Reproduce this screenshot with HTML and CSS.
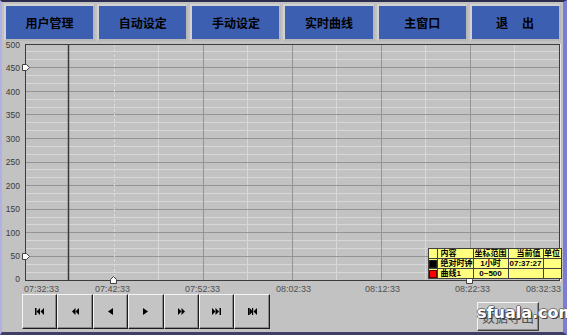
FILE: index.html
```html
<!DOCTYPE html>
<html lang="zh">
<head>
<meta charset="utf-8">
<title>实时曲线</title>
<link rel="stylesheet" href="styles.css">
</head>
<body>
<div class="screen">
  <nav class="topnav">
    <button class="nav-btn">用户管理</button>
    <button class="nav-btn">自动设定</button>
    <button class="nav-btn">手动设定</button>
    <button class="nav-btn">实时曲线</button>
    <button class="nav-btn">主窗口</button>
    <button class="nav-btn nav-exit">退　出</button>
  </nav>

  <div class="chart">
    <svg class="plot" width="561" height="252" viewBox="2 41 561 252">
      <g class="minor">
        <line x1="25" x2="559" y1="272.5" y2="272.5"/><line x1="25" x2="559" y1="264.5" y2="264.5"/>
        <line x1="25" x2="559" y1="248.5" y2="248.5"/><line x1="25" x2="559" y1="240.5" y2="240.5"/>
        <line x1="25" x2="559" y1="224.5" y2="224.5"/><line x1="25" x2="559" y1="217.5" y2="217.5"/>
        <line x1="25" x2="559" y1="201.5" y2="201.5"/><line x1="25" x2="559" y1="193.5" y2="193.5"/>
        <line x1="25" x2="559" y1="177.5" y2="177.5"/><line x1="25" x2="559" y1="169.5" y2="169.5"/>
        <line x1="25" x2="559" y1="154.5" y2="154.5"/><line x1="25" x2="559" y1="146.5" y2="146.5"/>
        <line x1="25" x2="559" y1="130.5" y2="130.5"/><line x1="25" x2="559" y1="122.5" y2="122.5"/>
        <line x1="25" x2="559" y1="107.5" y2="107.5"/><line x1="25" x2="559" y1="99.5" y2="99.5"/>
        <line x1="25" x2="559" y1="83.5" y2="83.5"/><line x1="25" x2="559" y1="75.5" y2="75.5"/>
        <line x1="25" x2="559" y1="59.5" y2="59.5"/><line x1="25" x2="559" y1="51.5" y2="51.5"/>
        <line x1="158.5" x2="158.5" y1="44" y2="280"/><line x1="247.5" x2="247.5" y1="44" y2="280"/>
        <line x1="336.5" x2="336.5" y1="44" y2="280"/><line x1="425.5" x2="425.5" y1="44" y2="280"/>
        <line x1="514.5" x2="514.5" y1="44" y2="280"/>
      </g>
      <g class="major">
        <line x1="25" x2="559" y1="256.5" y2="256.5"/><line x1="25" x2="559" y1="232.5" y2="232.5"/>
        <line x1="25" x2="559" y1="209.5" y2="209.5"/><line x1="25" x2="559" y1="185.5" y2="185.5"/>
        <line x1="25" x2="559" y1="162.5" y2="162.5"/><line x1="25" x2="559" y1="138.5" y2="138.5"/>
        <line x1="25" x2="559" y1="114.5" y2="114.5"/><line x1="25" x2="559" y1="91.5" y2="91.5"/>
        <line x1="25" x2="559" y1="67.5" y2="67.5"/>
        <line x1="203.5" x2="203.5" y1="44" y2="280"/><line x1="292.5" x2="292.5" y1="44" y2="280"/>
        <line x1="381.5" x2="381.5" y1="44" y2="280"/><line x1="470.5" x2="470.5" y1="44" y2="280"/>
      </g>
      <line class="cursor-light" x1="114.5" x2="114.5" y1="44" y2="280"/>
      <line class="cursor" x1="68.5" x2="68.5" y1="44" y2="280"/>
      <g class="frame">
        <line x1="25" x2="560" y1="44.5" y2="44.5"/>
        <line x1="25" x2="560" y1="280.5" y2="280.5"/>
        <line x1="25.5" x2="25.5" y1="44" y2="281"/>
        <line x1="559.5" x2="559.5" y1="44" y2="281"/>
      </g>
      <line class="frame-hi" x1="560.5" x2="560.5" y1="44" y2="282"/>

      <g class="ylabels">
        <text x="20" y="45">500</text>
        <text x="20" y="68">450</text>
        <text x="20" y="92">400</text>
        <text x="20" y="115">350</text>
        <text x="20" y="139">300</text>
        <text x="20" y="162">250</text>
        <text x="20" y="186">200</text>
        <text x="20" y="209">150</text>
        <text x="20" y="233">100</text>
        <text x="20" y="256">50</text>
        <text x="20" y="279">0</text>
      </g>
      <g class="xlabels">
        <text class="xl-start" x="24" y="288.5">07:32:33</text>
        <text x="112.5" y="288.5">07:42:33</text>
        <text x="202.5" y="288.5">07:52:33</text>
        <text x="293.5" y="288.5">08:02:33</text>
        <text x="382.5" y="288.5">08:12:33</text>
        <text x="472.5" y="288.5">08:22:33</text>
        <text class="xl-end" x="561" y="288.5">08:32:33</text>
      </g>

      <g class="marker">
        <polygon points="22.5,64.5 26.5,64.5 29.5,67.5 26.5,70.5 22.5,70.5"/>
        <polygon points="22.5,253.5 26.5,253.5 29.5,256.5 26.5,259.5 22.5,259.5"/>
        <polygon points="110.5,283.5 110.5,279.5 113.5,276.5 116.5,279.5 116.5,283.5"/>
        <polygon points="466.5,283.5 466.5,279.5 469.5,276.5 472.5,279.5 472.5,283.5"/>
      </g>
    </svg>

    <table class="legend">
      <colgroup>
        <col class="c-sw"><col class="c-name"><col class="c-range"><col class="c-val"><col class="c-unit">
      </colgroup>
      <tr>
        <td></td><td class="l">内容</td><td>坐标范围</td><td class="r">当前值</td><td>单位</td>
      </tr>
      <tr>
        <td><span class="swatch sw-black"></span></td><td class="l">绝对时钟</td><td>1小时</td><td>07:37:27</td><td></td>
      </tr>
      <tr>
        <td><span class="swatch sw-red"></span></td><td class="l">曲线1</td><td>0~500</td><td></td><td></td>
      </tr>
    </table>
  </div>

  <div class="controls">
    <div class="player">
      <button class="pbtn"><svg width="9" height="7" viewBox="0 0 9 7"><rect x="0" y="0" width="1.5" height="7"/><polygon points="5,0 1.5,3.5 5,7"/><polygon points="9,0 5.5,3.5 9,7"/></svg></button>
      <button class="pbtn"><svg width="7" height="7" viewBox="0 0 7 7"><polygon points="3.5,0 0,3.5 3.5,7"/><polygon points="7,0 3.5,3.5 7,7"/></svg></button>
      <button class="pbtn"><svg width="5" height="7" viewBox="0 0 5 7"><polygon points="5,0 0,3.5 5,7"/></svg></button>
      <button class="pbtn"><svg width="5" height="7" viewBox="0 0 5 7"><polygon points="0,0 5,3.5 0,7"/></svg></button>
      <button class="pbtn"><svg width="7" height="7" viewBox="0 0 7 7"><polygon points="0,0 3.5,3.5 0,7"/><polygon points="3.5,0 7,3.5 3.5,7"/></svg></button>
      <button class="pbtn"><svg width="9" height="7" viewBox="0 0 9 7"><polygon points="0,0 3.5,3.5 0,7"/><polygon points="3.5,0 7,3.5 3.5,7"/><rect x="7.5" y="0" width="1.5" height="7"/></svg></button>
      <button class="pbtn"><svg width="9" height="7" viewBox="0 0 9 7"><rect x="0" y="0" width="1.5" height="7"/><polygon points="1.5,0 5,3.5 1.5,7"/><polygon points="9,0 5.5,3.5 9,7"/><rect x="4" y="0" width="1.2" height="7"/></svg></button>
    </div>
    <button class="export">数据导出</button>
  </div>
</div>
<div class="watermark">sfuala.com</div>
</body>
</html>
```

FILE: styles.css
```css
html, body {
  margin: 0;
  padding: 0;
}
body {
  position: relative;
  width: 567px;
  height: 335px;
  overflow: hidden;
  background: #c0c0c0;
  font-family: "Liberation Sans", Arial, "Noto Sans CJK SC", sans-serif;
}
.screen {
  box-sizing: border-box;
  width: 567px;
  height: 335px;
  background: #c2c2c2;
  border-top: 2px solid #2c2c4c;
  border-left: 2px solid #b0b0e4;
  border-right: 4px solid #7c7cd0;
  border-bottom: 3px solid #3e3e66;
  display: flex;
  flex-direction: column;
  overflow: hidden;
}

/* top navigation */
.topnav {
  display: grid;
  grid-template-columns: repeat(6, 1fr);
  column-gap: 2px;
  padding: 2px 2px 0 2px;
  height: 39px;
  box-sizing: border-box;
  flex: none;
}
.nav-btn {
  margin: 0;
  padding: 0;
  height: 37px;
  background: #3c5fb1;
  border: 2px solid #d2d2d2;
  border-right-color: #b8b8b8;
  border-bottom-color: #b8b8b8;
  color: #000;
  font-family: "Noto Sans CJK SC", sans-serif;
  font-weight: 700;
  font-size: 12px;
  line-height: 1;
}
.nav-exit {
  letter-spacing: 1px;
}

/* chart */
.chart {
  position: relative;
  flex: none;
  height: 252px;
}
.plot {
  display: block;
  overflow: visible;
}
.minor line {
  stroke: #d8d8d8;
  stroke-width: 1;
}
.major line {
  stroke: #949494;
  stroke-width: 1;
}
.cursor-light {
  stroke: #dadada;
  stroke-width: 1;
  stroke-dasharray: 3 2;
}
.cursor {
  stroke: #3a3a3a;
  stroke-width: 1.5;
}
.frame line {
  stroke: #3c3c3c;
  stroke-width: 1;
}
.frame-hi {
  stroke: #e8e8e8;
  stroke-width: 1;
}
.ylabels text {
  font-family: "Liberation Sans", Arial, sans-serif;
  font-size: 8.5px;
  fill: #3a3a3a;
  text-anchor: end;
  dominant-baseline: central;
}
.xlabels text {
  font-family: "Liberation Sans", Arial, sans-serif;
  font-size: 9px;
  fill: #505050;
  text-anchor: middle;
  dominant-baseline: central;
}
.xlabels text.xl-start {
  text-anchor: start;
}
.xlabels text.xl-end {
  text-anchor: end;
}
.marker polygon {
  fill: #fafafa;
  stroke: #404040;
  stroke-width: 1;
}

/* legend */
.legend {
  position: absolute;
  left: 425.5px;
  top: 207px;
  width: 133px;
  border-collapse: collapse;
  table-layout: fixed;
  background: #ffff80;
  font-family: "Liberation Sans", Arial, "Noto Sans CJK SC", sans-serif;
  font-weight: 700;
  font-size: 8px;
  line-height: 9px;
  color: #000;
}
.legend td {
  border: 1px solid #404040;
  height: 9px;
  padding: 0;
  text-align: center;
  white-space: nowrap;
  overflow: hidden;
}
.legend td.l {
  text-align: left;
  padding-left: 3px;
}
.legend td.r {
  text-align: right;
  padding-right: 2px;
}
.c-sw { width: 9px; }
.c-name { width: 36px; }
.c-range { width: 35px; }
.c-val { width: 35px; }
.c-unit { width: 18px; }
.swatch {
  display: block;
  width: 6px;
  height: 6px;
  margin: 0 auto;
  border: 1px solid #202020;
}
.sw-black { background: #000; }
.sw-red { background: #ff0000; border-color: #600000; }

/* bottom controls */
.controls {
  flex: 1;
  display: flex;
  justify-content: space-between;
  align-items: flex-start;
  padding: 1px 24px 0 20px;
}
.player {
  display: grid;
  grid-template-columns: repeat(7, 35.4px);
}
.pbtn {
  margin: 0;
  padding: 0;
  height: 35px;
  background: #c4c4c4;
  border: 1px solid;
  border-color: #f4f4f4 #1c1c1c #1c1c1c #f4f4f4;
  box-shadow: inset -1px -1px 0 #8a8a8a;
  display: flex;
  align-items: center;
  justify-content: center;
}
.pbtn svg {
  display: block;
  fill: #000;
}
.export {
  margin: 8px 0 0 0;
  padding: 0;
  width: 62px;
  height: 29px;
  background: #c6c6c6;
  border: 1px solid;
  border-color: #f4f4f4 #404040 #404040 #f4f4f4;
  box-shadow: inset -1px -1px 0 #8a8a8a;
  font-family: "Noto Sans CJK SC", sans-serif;
  font-size: 13px;
  color: #505050;
  line-height: 1;
}

.watermark {
  position: absolute;
  left: 477px;
  top: 305px;
  font-family: "DejaVu Sans", sans-serif;
  font-weight: 700;
  font-size: 16px;
  line-height: 1;
  color: #ffffff;
  white-space: nowrap;
  text-shadow: 1px 1px 0 #3a3a3a, -1px 0 0 #6a6a6a, 0 -1px 0 #7a7a7a, 1px 0 0 #555;
}
```
